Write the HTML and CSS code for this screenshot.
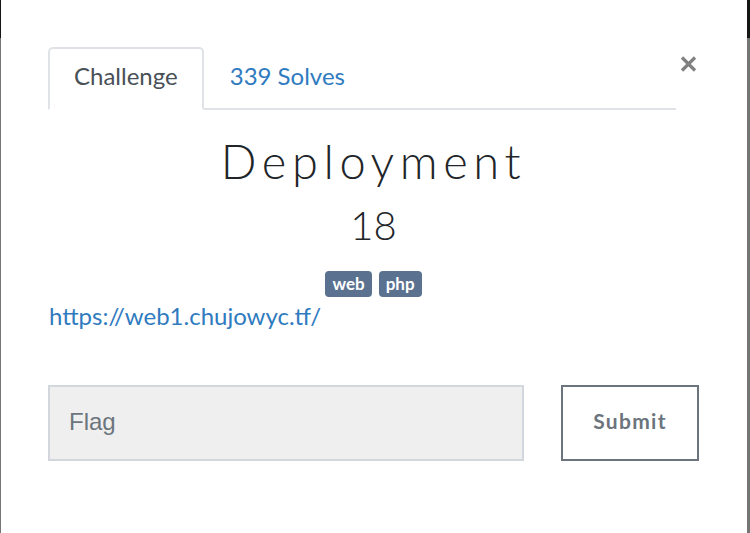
FILE: index.html
```html
<!DOCTYPE html>
<html>
<head>
<meta charset="utf-8">
<link rel="stylesheet" href="styles.css">
</head>
<body>
<div class="backdrop">
  <div class="modal">
    <div class="top">
      <ul class="tabs">
        <li class="tab active">Challenge</li>
        <li class="tab">339 Solves</li>
      </ul>
      <button class="close" aria-label="Close">
        <svg width="17" height="16" viewBox="0 0 17 16"><path d="M2 1.5 L15 14.5 M15 1.5 L2 14.5" stroke="#808080" stroke-width="3.2" stroke-linecap="butt"/></svg>
      </button>
    </div>
    <h3 class="name">Deployment</h3>
    <h4 class="value">18</h4>
    <div class="tags"><span class="badge">web</span><span class="badge">php</span></div>
    <a class="link" href="#">https://web1.chujowyc.tf/</a>
    <div class="submit-row">
      <input class="flag" type="text" placeholder="Flag">
      <button class="submit">Submit</button>
    </div>
  </div>
</div>
</body>
</html>
```

FILE: styles.css
```css
html, body {
  margin: 0;
  padding: 0;
  height: 100%;
}
body {
  font-family: Lato, "Liberation Sans", sans-serif;
  overflow: hidden;
}
.backdrop {
  height: 533px;
  padding: 0 3px 0 1px;
  background: linear-gradient(#151515 0, #151515 38px, #757575 38px);
  box-sizing: border-box;
}
.modal {
  background: #fff;
  height: 100%;
  padding: 47px 48px 0 47px;
  box-sizing: border-box;
}
.top {
  display: flex;
  align-items: flex-start;
}
.tabs {
  flex: 1;
  display: flex;
  list-style: none;
  margin: 0;
  padding: 0;
  border-bottom: 2px solid #dfe3e7;
}
.tab {
  font-size: 24px;
  line-height: 24px;
  padding: 15px 24px 20px;
  color: #2f7bbf;
  border: 2px solid transparent;
  border-radius: 5px 5px 0 0;
  margin-bottom: -2px;
}
.tab.active {
  color: #495057;
  border-color: #dfe3e7 #dfe3e7 #fff;
  background: #fff;
}
.close {
  background: none;
  border: 0;
  padding: 0;
  margin: 9px 1px 0 3px;
  width: 19px;
  height: 16px;
  display: flex;
  justify-content: center;
}
.name {
  margin: 23px 0 0;
  text-align: center;
  font-family: Lato, sans-serif;
  font-weight: 300;
  font-size: 47px;
  letter-spacing: 5.6px;
  line-height: 56px;
  color: #212529;
}
.value {
  margin: 12px 0 0;
  text-align: center;
  font-family: Lato, sans-serif;
  font-weight: 300;
  font-size: 40px;
  line-height: 48px;
  color: #212529;
}
.tags {
  display: flex;
  justify-content: center;
  gap: 7px;
  margin-top: 22px;
}
.badge {
  background: #5b7190;
  color: #fff;
  font-weight: 700;
  font-size: 17px;
  line-height: 26px;
  height: 26px;
  padding: 0 7px;
  border-radius: 4px;
}
.link {
  display: block;
  margin-top: 3px;
  margin-left: 1px;
  font-size: 24px;
  line-height: 32px;
  color: #2f7bbf;
  text-decoration: none;
  width: max-content;
}
.submit-row {
  display: grid;
  grid-template-columns: 476px 138px;
  column-gap: 37px;
  margin-top: 53px;
}
.flag {
  box-sizing: border-box;
  height: 76px;
  border: 2px solid #d2d7dd;
  background: #efefef;
  padding: 0 19px 2px;
  font-family: "Liberation Sans", Arial, sans-serif;
  font-size: 24px;
  color: #495057;
  outline: none;
}
.flag::placeholder {
  color: #6c757d;
}
.submit {
  box-sizing: border-box;
  height: 76px;
  border: 2px solid #6c757d;
  background: #fff;
  color: #6c757d;
  font-family: Lato, sans-serif;
  font-weight: 700;
  font-size: 21px;
  letter-spacing: 1.3px;
  padding: 0 0 6px;
}
```
